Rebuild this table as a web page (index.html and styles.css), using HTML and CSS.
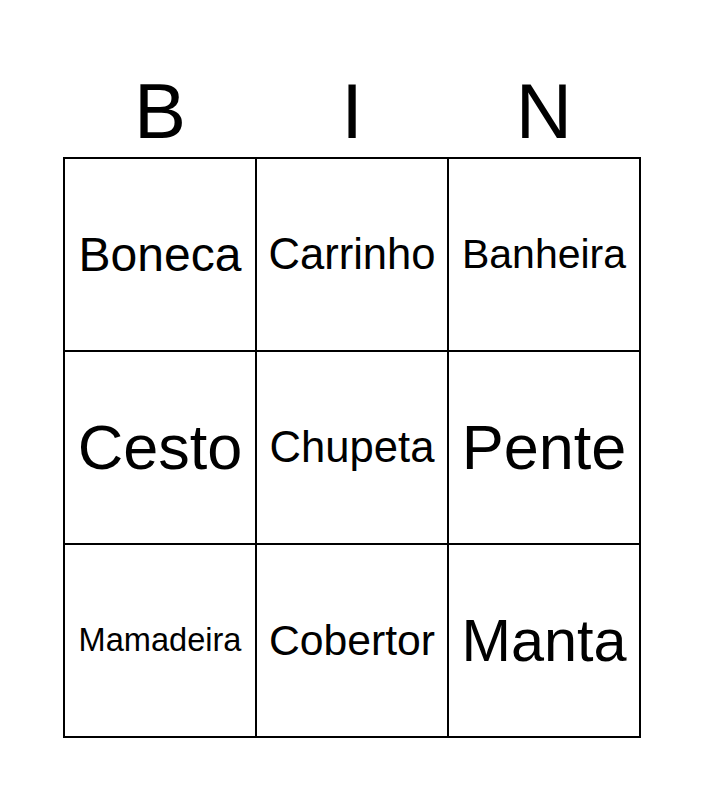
FILE: index.html
```html
<!DOCTYPE html>
<html>
<head>
<meta charset="utf-8">
<link rel="stylesheet" href="styles.css">
</head>
<body>
<div class="page">
  <div class="header">
    <div class="letter">B</div>
    <div class="letter">I</div>
    <div class="letter">N</div>
  </div>
  <div class="board">
    <div class="cell fs48">Boneca</div>
    <div class="cell fs44">Carrinho</div>
    <div class="cell fs41">Banheira</div>
    <div class="cell fs63">Cesto</div>
    <div class="cell fs44">Chupeta</div>
    <div class="cell fs63">Pente</div>
    <div class="cell fs33">Mamadeira</div>
    <div class="cell fs43">Cobertor</div>
    <div class="cell fs59">Manta</div>
  </div>
</div>
</body>
</html>
```
FILE: styles.css
```css
html, body {
  margin: 0;
  padding: 0;
  background: #fff;
}
body {
  font-family: "Liberation Sans", Arial, sans-serif;
  color: #000;
}
.page {
  width: 705px;
  height: 800px;
  padding-top: 72px;
  box-sizing: border-box;
}
.header {
  margin-left: 64px;
  display: grid;
  grid-template-columns: repeat(3, 192px);
  height: 78px;
  margin-bottom: 7px;
}
.letter {
  font-size: 78px;
  line-height: 78px;
  text-align: center;
}
.board {
  margin-left: 63px;
  display: grid;
  grid-template-columns: repeat(3, 192px);
  grid-template-rows: repeat(3, 193px);
  width: max-content;
  border-left: 2px solid #000;
  border-top: 2px solid #000;
}
.cell {
  border-right: 2px solid #000;
  border-bottom: 2px solid #000;
  display: flex;
  align-items: center;
  justify-content: center;
  white-space: nowrap;
  line-height: 1;
}
.fs48 { font-size: 48px; }
.fs44 { font-size: 43.6px; }
.fs43 { font-size: 42.7px; }
.fs41 { font-size: 41px; }
.fs63 { font-size: 63px; }
.fs33 { font-size: 32.6px; }
.fs59 { font-size: 59.4px; }
```
